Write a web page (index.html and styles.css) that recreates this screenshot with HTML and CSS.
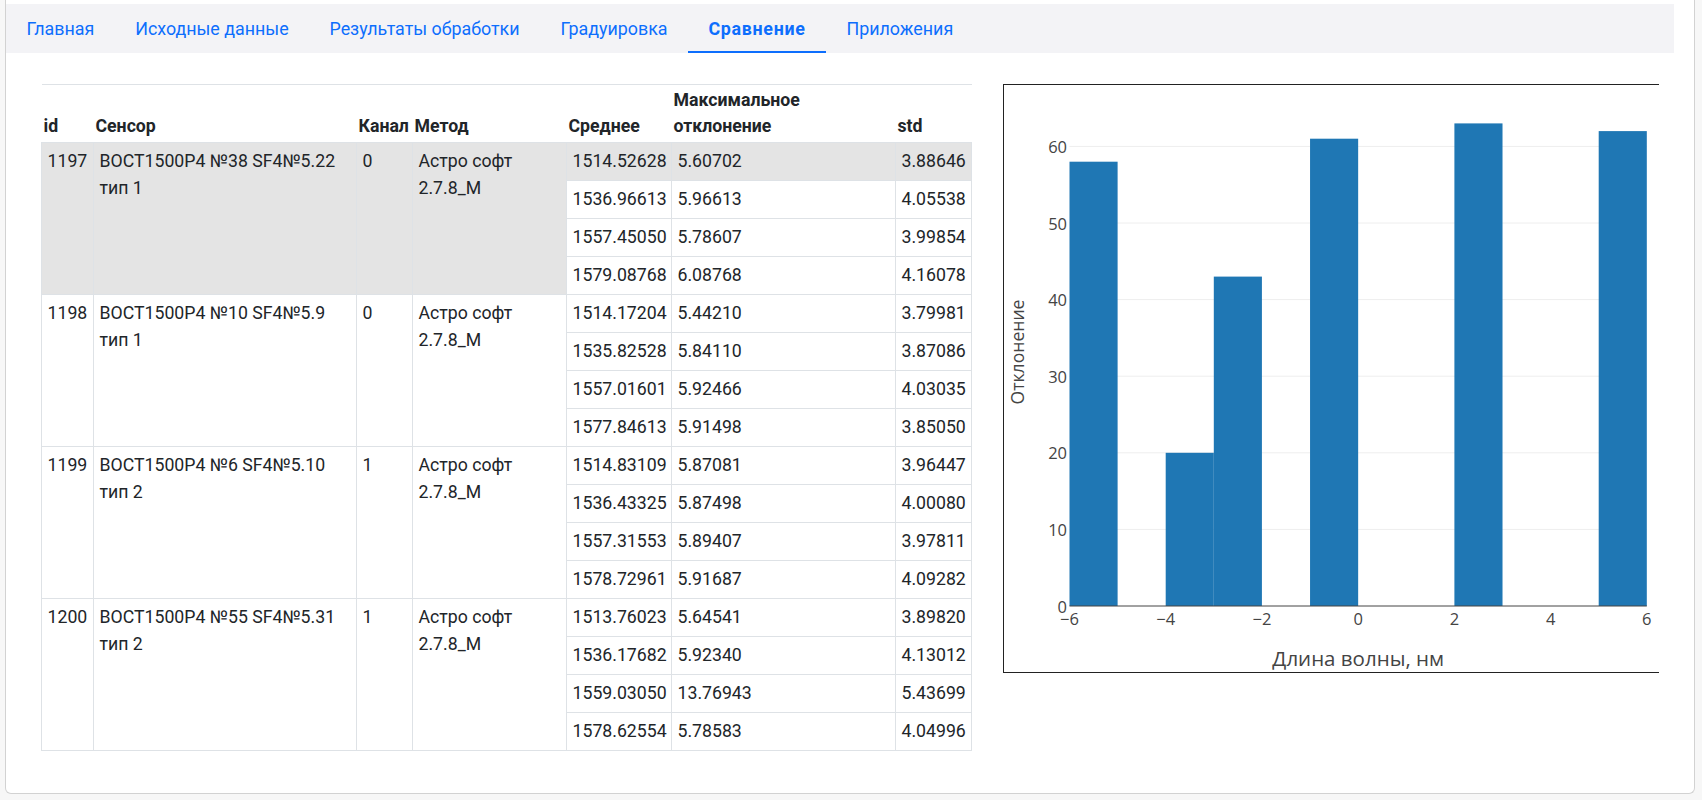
FILE: index.html
```html
<!DOCTYPE html>
<html lang="ru">
<head>
<meta charset="utf-8">
<title>Сравнение</title>
<link rel="stylesheet" href="styles.css">
</head>
<body>
<div class="card">
  <nav class="tabs">
    <a class="tab">Главная</a>
    <a class="tab">Исходные данные</a>
    <a class="tab">Результаты обработки</a>
    <a class="tab">Градуировка</a>
    <a class="tab active">Сравнение</a>
    <a class="tab">Приложения</a>
  </nav>
  <div class="content">
    <table class="data">
      <colgroup>
        <col class="c-id"><col class="c-sensor"><col class="c-chan"><col class="c-method"><col class="c-mean"><col class="c-max"><col class="c-std">
      </colgroup>
      <thead>
        <tr><th>id</th><th>Сенсор</th><th>Канал</th><th>Метод</th><th>Среднее</th><th>Максимальное<br>отклонение</th><th>std</th></tr>
      </thead>
      <tbody>
        <tr class="hover"><td rowspan="4">1197</td><td rowspan="4">BOCT1500P4 №38 SF4№5.22<br>тип 1</td><td rowspan="4">0</td><td rowspan="4">Астро софт<br>2.7.8_M</td><td>1514.52628</td><td>5.60702</td><td>3.88646</td></tr>
        <tr><td>1536.96613</td><td>5.96613</td><td>4.05538</td></tr>
        <tr><td>1557.45050</td><td>5.78607</td><td>3.99854</td></tr>
        <tr><td>1579.08768</td><td>6.08768</td><td>4.16078</td></tr>
        <tr><td rowspan="4">1198</td><td rowspan="4">BOCT1500P4 №10 SF4№5.9<br>тип 1</td><td rowspan="4">0</td><td rowspan="4">Астро софт<br>2.7.8_M</td><td>1514.17204</td><td>5.44210</td><td>3.79981</td></tr>
        <tr><td>1535.82528</td><td>5.84110</td><td>3.87086</td></tr>
        <tr><td>1557.01601</td><td>5.92466</td><td>4.03035</td></tr>
        <tr><td>1577.84613</td><td>5.91498</td><td>3.85050</td></tr>
        <tr><td rowspan="4">1199</td><td rowspan="4">BOCT1500P4 №6 SF4№5.10<br>тип 2</td><td rowspan="4">1</td><td rowspan="4">Астро софт<br>2.7.8_M</td><td>1514.83109</td><td>5.87081</td><td>3.96447</td></tr>
        <tr><td>1536.43325</td><td>5.87498</td><td>4.00080</td></tr>
        <tr><td>1557.31553</td><td>5.89407</td><td>3.97811</td></tr>
        <tr><td>1578.72961</td><td>5.91687</td><td>4.09282</td></tr>
        <tr><td rowspan="4">1200</td><td rowspan="4">BOCT1500P4 №55 SF4№5.31<br>тип 2</td><td rowspan="4">1</td><td rowspan="4">Астро софт<br>2.7.8_M</td><td>1513.76023</td><td>5.64541</td><td>3.89820</td></tr>
        <tr><td>1536.17682</td><td>5.92340</td><td>4.13012</td></tr>
        <tr><td>1559.03050</td><td>13.76943</td><td>5.43699</td></tr>
        <tr><td>1578.62554</td><td>5.78583</td><td>4.04996</td></tr>
      </tbody>
    </table>
    <div class="chart">
      <div class="plot">
        <svg class="plot-svg" width="740" height="587" viewBox="0 0 740 587">
          <g class="grid">
            <line x1="65.5" x2="642.8" y1="444.4" y2="444.4"/>
            <line x1="65.5" x2="642.8" y1="367.8" y2="367.8"/>
            <line x1="65.5" x2="642.8" y1="291.2" y2="291.2"/>
            <line x1="65.5" x2="642.8" y1="214.6" y2="214.6"/>
            <line x1="65.5" x2="642.8" y1="138" y2="138"/>
            <line x1="65.5" x2="642.8" y1="61.4" y2="61.4"/>
          </g>
          <g class="bars">
            <rect x="65.5" y="76.7" width="48.11" height="444.3"/>
            <rect x="161.7" y="367.8" width="48.11" height="153.2"/>
            <rect x="209.8" y="191.6" width="48.11" height="329.4"/>
            <rect x="306.05" y="53.7" width="48.11" height="467.3"/>
            <rect x="450.4" y="38.4" width="48.11" height="482.6"/>
            <rect x="594.7" y="46.1" width="48.11" height="474.9"/>
          </g>
          <line class="axis" x1="65.5" x2="642.8" y1="521" y2="521"/>
          <g class="ytick">
            <text x="63" y="521">0</text>
            <text x="63" y="444.4">10</text>
            <text x="63" y="367.8">20</text>
            <text x="63" y="291.2">30</text>
            <text x="63" y="214.6">40</text>
            <text x="63" y="138">50</text>
            <text x="63" y="61.4">60</text>
          </g>
          <g class="xtick">
            <text x="65.5" y="533.7">−6</text>
            <text x="161.7" y="533.7">−4</text>
            <text x="257.9" y="533.7">−2</text>
            <text x="354.2" y="533.7">0</text>
            <text x="450.4" y="533.7">2</text>
            <text x="546.6" y="533.7">4</text>
            <text x="642.8" y="533.7">6</text>
          </g>
          <text class="xtitle" x="354.2" y="573">Длина волны, нм</text>
          <text class="ytitle" x="13" y="267" transform="rotate(-90 13 267)">Отклонение</text>
        </svg>
      </div>
    </div>
  </div>
</div>
</body>
</html>
```
FILE: styles.css
```css
html, body {
  margin: 0;
  padding: 0;
}
body {
  background: #f7f7f7;
  font-family: Roboto, "Noto Sans", sans-serif;
  color: #212529;
}
.card {
  margin: 0 7px 7px 5px;
  background: #fff;
  border: 1px solid #d2d2d2;
  border-top: 0;
  border-radius: 0 0 6px 6px;
  padding-top: 4px;
}
.tabs {
  display: flex;
  height: 49px;
  margin-right: 20px;
  background: #f3f3f6;
}
.tab {
  position: relative;
  display: block;
  padding: 0 20.45px;
  line-height: 49px;
  font-size: 17.85px;
  color: #0d6efd;
  cursor: pointer;
}
.tab.active {
  font-weight: 700;
  letter-spacing: 0.7px;
}
.tab.active::after {
  content: "";
  position: absolute;
  left: 0;
  right: 0;
  bottom: 0;
  height: 2px;
  background: #0d6efd;
}
.content {
  display: grid;
  grid-template-columns: 930px 1fr;
  column-gap: 32px;
  align-items: start;
  padding: 31px 35px 42px 35px;
}
.data {
  width: 930px;
  table-layout: fixed;
  border-collapse: collapse;
  border-top: 1px solid #dee2e6;
  font-size: 17.7px;
  line-height: 26.4px;
}
.c-id { width: 52px; }
.c-sensor { width: 263px; }
.c-chan { width: 56px; }
.c-method { width: 154px; }
.c-mean { width: 105px; }
.c-max { width: 224px; }
.c-std { width: 76px; }
.data th {
  text-align: left;
  vertical-align: bottom;
  font-weight: 700;
  padding: 2px 2px;
  white-space: nowrap;
}
.data td {
  vertical-align: top;
  padding: 5.3px 5.5px;
  border: 1px solid #dee2e6;
  white-space: nowrap;
}
.data tr.hover td {
  background: #e4e4e4;
}
.chart {
  overflow: hidden;
  min-width: 0;
}
.plot {
  width: 740px;
  height: 587px;
  border: 1px solid #222;
  background: #fff;
}
.plot-svg {
  display: block;
  font-family: "Open Sans", "DejaVu Sans", sans-serif;
}
.grid line {
  stroke: #eeeeee;
  stroke-width: 1;
}
.bars rect {
  fill: #1f77b4;
}
.axis {
  stroke: #444;
  stroke-width: 1;
}
.ytick text {
  font-size: 16.5px;
  fill: #444;
  text-anchor: end;
  dominant-baseline: central;
}
.xtick text {
  font-size: 16.5px;
  fill: #444;
  text-anchor: middle;
  dominant-baseline: central;
}
.xtitle {
  font-size: 20.5px;
  fill: #444;
  text-anchor: middle;
  dominant-baseline: central;
}
.ytitle {
  font-size: 17.6px;
  fill: #444;
  text-anchor: middle;
  dominant-baseline: central;
}
```
